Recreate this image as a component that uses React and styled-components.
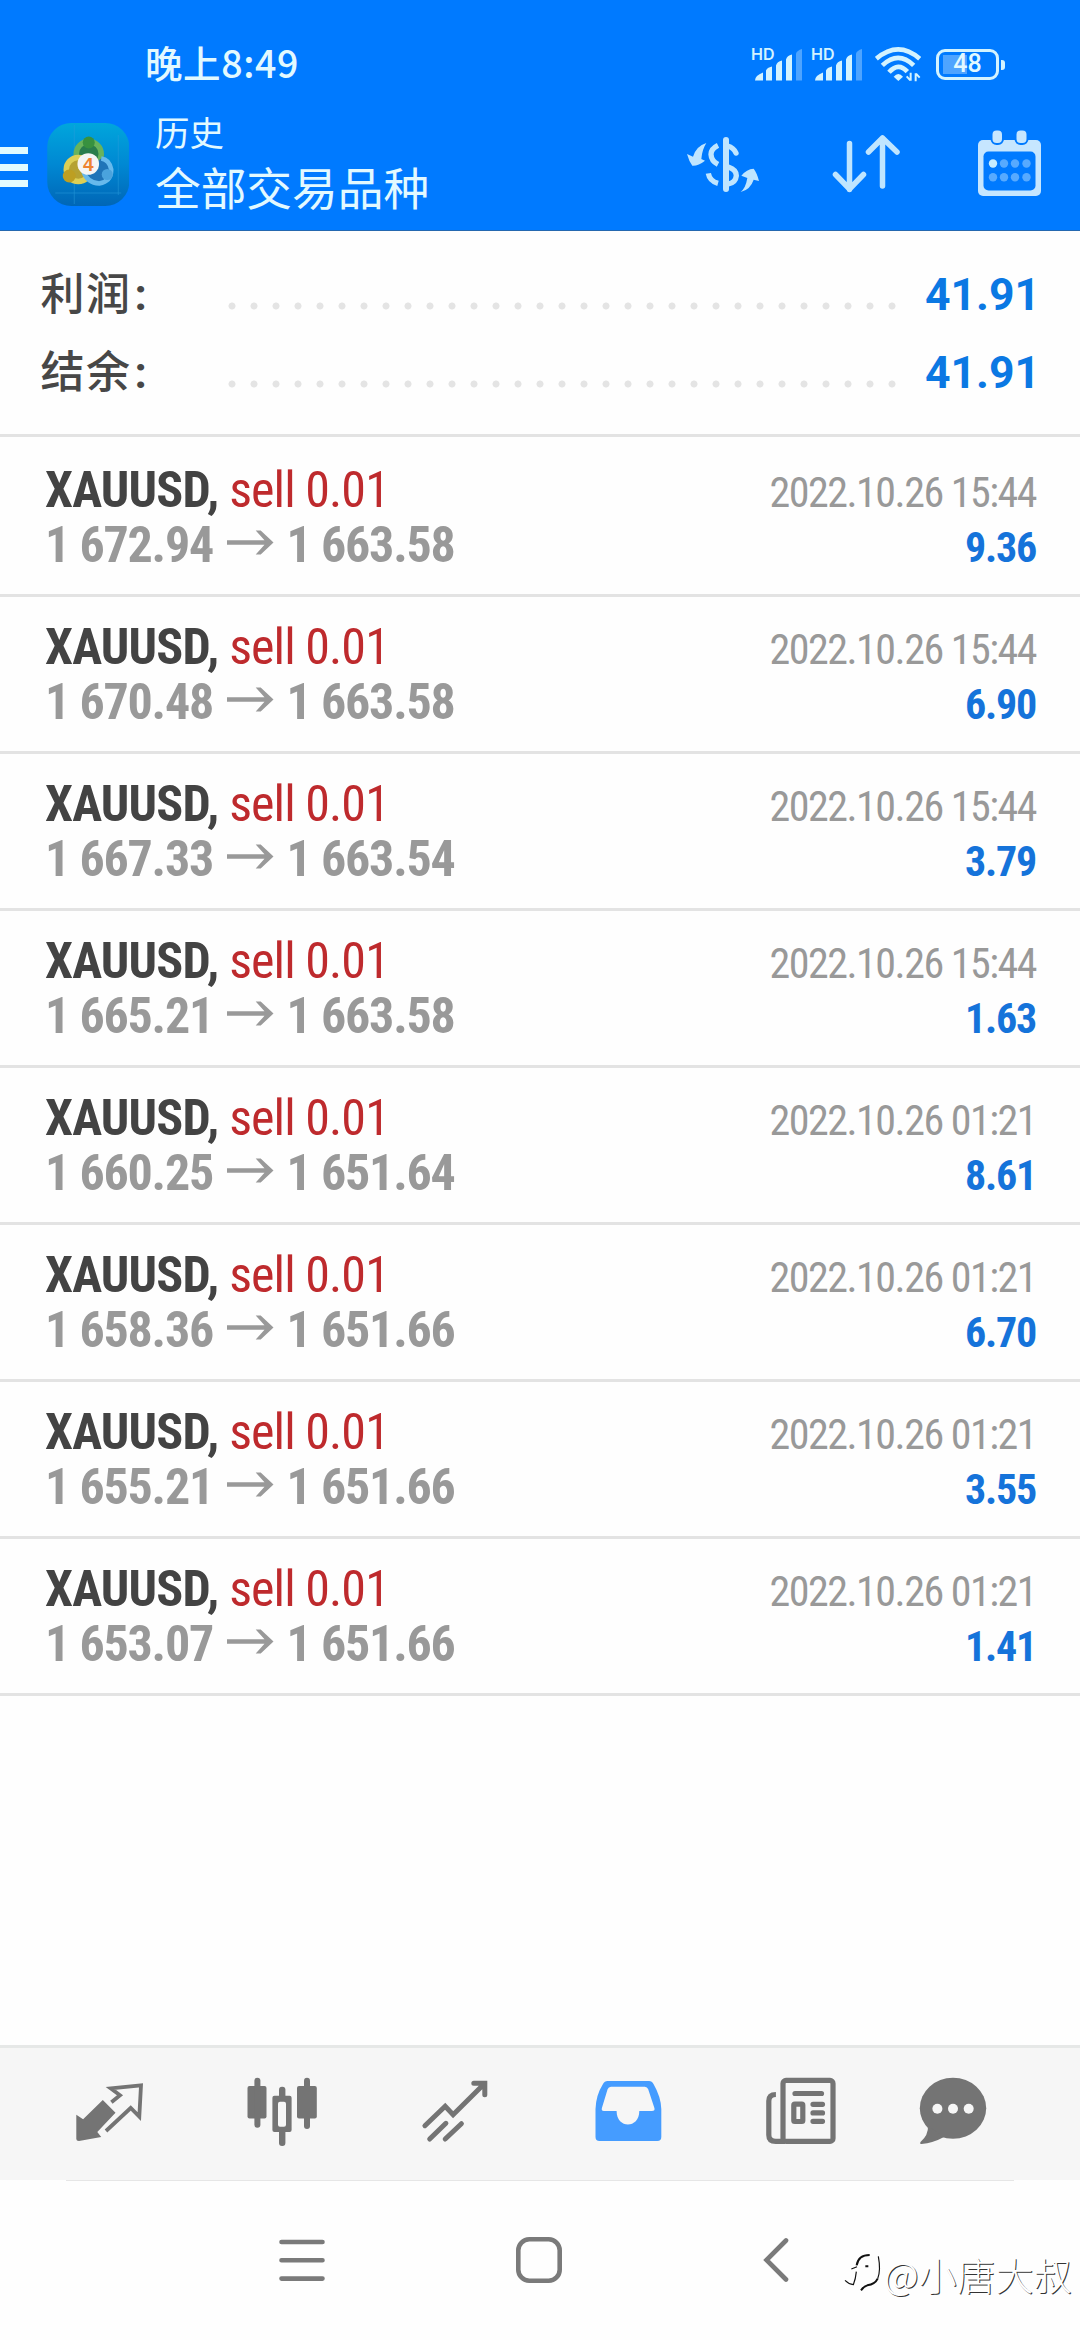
import React from "react";
import styled, { createGlobalStyle } from "styled-components";

const GlobalStyle = createGlobalStyle`
  * {
    box-sizing: border-box;
  }
  body {
    margin: 0;
    background: #fefefe;
    font-family: Roboto, "Noto Sans CJK SC", sans-serif;
  }
  svg {
    display: block;
    flex-shrink: 0;
  }
`;

const Screen = styled.div`
  position: relative;
  display: flex;
  flex-direction: column;
  width: 1080px;
  height: 2340px;
  background: #fefefe;
  overflow: hidden;
`;

const Header = styled.header`
  height: 231px;
  background: #007aff;
  border-bottom: 1px solid #2468b0;
  color: #e2f9ff;
`;

const StatusBar = styled.div`
  display: flex;
  align-items: center;
  height: 104px;
  padding: 24px 81px 0 145px;
`;

const Clock = styled.span`
  flex: 1;
  margin-top: -4px;
  font-family: "Noto Sans CJK SC", sans-serif;
  font-size: 37.5px;
  font-weight: 500;
  line-height: 50px;
  letter-spacing: 0.6px;
`;

const StatusIcons = styled.div`
  display: flex;
  align-items: center;
`;

const Signal = styled.svg`
  margin-right: ${(p) => p.$gap}px;
`;

const Battery = styled.div`
  position: relative;
  display: flex;
  align-items: center;
  justify-content: center;
  width: 63px;
  height: 31px;
  margin-left: 15px;
  border: 3px solid #d3f3ff;
  border-radius: 9px;
  font-size: 25px;
  font-weight: 500;
  line-height: 26px;
  background: linear-gradient(#4ea4ff, #4ea4ff) 4px 3px / 24px 19px no-repeat;

  &::after {
    content: "";
    position: absolute;
    right: -9px;
    top: 8px;
    width: 4px;
    height: 10px;
    border-radius: 0 3px 3px 0;
    background: #d3f3ff;
  }
`;

const Toolbar = styled.div`
  display: flex;
  align-items: center;
  height: 126px;
  padding: 0 37px 5px 0;
`;

const MenuButton = styled.div`
  display: flex;
  flex-direction: column;
  gap: 9.5px;
  width: 27.5px;
  margin: 5px 19px 0 0;

  span {
    height: 7px;
    background: #e2fbff;
  }
`;

const Titles = styled.div`
  flex: 1;
  display: flex;
  flex-direction: column;
  gap: 8px;
  margin: 3px 0 0 26px;
`;

const Caption = styled.span`
  font-size: 34.5px;
  line-height: 42px;
`;

const Title = styled.span`
  font-size: 45.7px;
  line-height: 56px;
`;

const Action = styled.div`
  margin-left: ${(p) => p.$gap}px;
  margin-bottom: ${(p) => p.$lift || 3}px;
`;

const Summary = styled.section`
  height: 206px;
  padding-top: 22px;
  border-bottom: 3px solid #e3e3e3;
`;

const SummaryRow = styled.div`
  display: flex;
  align-items: center;
  height: 78px;
  padding: 0 40px 0 40.5px;
`;

const SummaryLabel = styled.span`
  width: 180px;
  margin-top: 5px;
  color: #474747;
  font-size: 44px;
  font-weight: 500;
  line-height: 60px;
  letter-spacing: 1.5px;
`;

const Colon = styled.span`
  margin-left: 3px;
  font-weight: 700;
`;

const Dots = styled.span`
  width: 682px;
  height: 8px;
  margin-top: 27px;
  background: radial-gradient(circle, #e4e4e4 3.1px, transparent 3.9px) 0 0 / 22px 8px;
`;

const SummaryValue = styled.span`
  flex: 1;
  margin-top: 5px;
  color: #0b78e3;
  font-size: 44.5px;
  font-weight: 700;
  line-height: 60px;
  text-align: right;
`;

const List = styled.ul`
  margin: 0;
  padding: 0;
  list-style: none;
  border-bottom: 3px solid #e3e3e3;
`;

const Deal = styled.li`
  height: 157px;
  padding: 23px 44px 0 45px;
  border-top: 3px solid #e3e3e3;
  font-family: "Roboto Condensed", Roboto, sans-serif;
  letter-spacing: -1.2px;

  &:first-child {
    border-top-color: transparent;
  }
`;

const DealLine = styled.div`
  display: flex;
  align-items: baseline;
  justify-content: space-between;
  height: 55px;
  line-height: 55px;
  white-space: pre;
`;

const Symbol = styled.span`
  color: #434343;
  font-size: 50px;
  font-weight: 700;
  letter-spacing: -0.8px;
`;

const Side = styled.span`
  color: #be2a2d;
  font-weight: 400;
  letter-spacing: -0.9px;
`;

const Prices = styled.span`
  color: #999;
  font-size: 50px;
  font-weight: 700;

  svg {
    display: inline-block;
    vertical-align: 7px;
    margin: 0 13px 0 13.5px;
  }
`;

const DealTime = styled.span`
  color: #999;
  font-size: 42px;
  letter-spacing: -1.5px;
`;

const Profit = styled.span`
  color: #1573da;
  font-size: 42px;
  font-weight: 700;
`;

const Blank = styled.div`
  flex: 1;
`;

const TabBar = styled.nav`
  display: flex;
  height: 135px;
  padding-left: 22px;
  border-top: 3px solid #e6e8e7;
  background: #f6f6f6;
`;

const Tab = styled.div`
  display: flex;
  align-items: center;
  justify-content: center;
  width: ${(p) => p.$width || 173}px;
  color: ${(p) => (p.$active ? "#459cff" : "#747474")};
`;

const SystemBar = styled.div`
  display: flex;
  height: 160px;
  padding: 0 183.5px;

  &::before {
    content: "";
    align-self: flex-start;
    flex-shrink: 0;
    width: 948px;
    height: 1px;
    margin: 0 -830.5px 0 -117.5px;
    background: #e6e6e6;
  }
`;

const SystemKey = styled.div`
  display: flex;
  align-items: center;
  justify-content: center;
  width: 237px;
  flex-shrink: 0;
`;

const Watermark = styled.div`
  position: absolute;
  right: 8px;
  bottom: 36px;
  display: flex;
  align-items: center;
  color: #fff;
  font-family: "Noto Sans CJK SC", sans-serif;
  font-size: 38px;
  font-weight: 300;
  line-height: 60px;
  letter-spacing: 0.3px;
  text-shadow: 1px 1px 0.5px #333;
`;

const deals = [
  { open: "1 672.94", close: "1 663.58", time: "2022.10.26 15:44", profit: "9.36" },
  { open: "1 670.48", close: "1 663.58", time: "2022.10.26 15:44", profit: "6.90" },
  { open: "1 667.33", close: "1 663.54", time: "2022.10.26 15:44", profit: "3.79" },
  { open: "1 665.21", close: "1 663.58", time: "2022.10.26 15:44", profit: "1.63" },
  { open: "1 660.25", close: "1 651.64", time: "2022.10.26 01:21", profit: "8.61" },
  { open: "1 658.36", close: "1 651.66", time: "2022.10.26 01:21", profit: "6.70" },
  { open: "1 655.21", close: "1 651.66", time: "2022.10.26 01:21", profit: "3.55" },
  { open: "1 653.07", close: "1 651.66", time: "2022.10.26 01:21", profit: "1.41" },
];

const SignalIcon = ({ gap }) => (
  <Signal $gap={gap} width="54" height="40" viewBox="-4 -2 54 40" fill="#d3f3ff">
    <text x="-1" y="13.500" fontFamily="Inter" fontSize="16" fontWeight="600">HD</text>
    <path d="M3 34.500q0-5 8-8v8zM14 34.500v-10q1-3 6-4v14zM24 34.500v-15q1-4 6-5v20zM34 34.500v-21q1-4 6-5v26z" />
    <path d="M44 34.500v-27q1-3 6-4.500v31.500z" fill="#4ea4ff" />
  </Signal>
);

const WifiIcon = () => (
  <svg width="46" height="36" viewBox="41 32 138 108" fill="none" stroke="#d3f3ff" strokeWidth="14">
    <path d="M45 70Q111 14 175 70M63 90Q111 45 157 90M83 111Q111 79 138 109" />
    <path d="M97 124q14-16 28 0l-14 13z" fill="#d3f3ff" stroke="none" />
    <path d="M148 112v24M147 135l-11-12M163 138v-24M164 115l11 12" strokeWidth="6" />
  </svg>
);

const AppIcon = () => (
  <svg width="82.5" height="83" viewBox="0 0 82 83">
    <defs>
      <linearGradient id="tile" x1="0" y1="0" x2="0" y2="1">
        <stop offset="0" stopColor="#00a6dc" />
        <stop offset="0.5" stopColor="#0088d3" />
        <stop offset="1" stopColor="#0066b6" />
      </linearGradient>
    </defs>
    <rect width="82" height="83" rx="24" fill="url(#tile)" />
    <path d="M27 2v79M71 12v60M8 70h66" stroke="#2b9fdd" strokeWidth="0.7" opacity="0.7" />
    <circle cx="41.500" cy="31" r="12.500" fill="#2a7d4c" stroke="#68b35c" strokeWidth="5.500" />
    <circle cx="31" cy="46.500" r="12" fill="#b5a232" stroke="#dccf55" strokeWidth="5.500" />
    <path d="M36 48q4 12 16 12.500q12-2 12-14q-2-10-10-11" fill="#1f74b8" stroke="#67b9ec" strokeWidth="4.500" />
    <circle cx="41.500" cy="19.500" r="6" fill="#38913f" />
    <circle cx="22" cy="53" r="6.500" fill="#bd9f22" />
    <circle cx="60" cy="51.500" r="5.500" fill="#4aa3dd" />
    <circle cx="41" cy="41" r="10.800" fill="#f5f5f4" />
    <text x="41" y="47.500" textAnchor="middle" fontFamily="Liberation Sans" fontSize="19" fill="#ee8331" fontWeight="700">4</text>
  </svg>
);

const CurrencyIcon = () => (
  <svg width="100" height="80" viewBox="0 0 300 240" fill="#bfe5ff">
    <path d="M18 99l18 8q10-32 40-41q-13 20-15 48l11 5q-20 16-38 15q-10-13-16-35z" />
    <path d="M181 164q16-20 37-21q10 13 16 37l-16-4q-10 30-39 37q15-12 20-42z" />
    <rect x="126" y="48" width="18" height="165" rx="9" />
    <g fill="none" stroke="#bfe5ff" strokeWidth="16">
      <path d="M111 73Q90 83 90 100Q91 120 111 130M82 157Q86 180 111 187M142 138Q166 146 166 164Q164 184 142 189" />
      <path d="M140 75Q158 80 165 96" strokeLinecap="round" />
    </g>
  </svg>
);

const SortIcon = () => (
  <svg width="70" height="64" viewBox="0 0 70 64" fill="none" stroke="#bfe5ff" strokeWidth="5.500" strokeLinecap="round" strokeLinejoin="round">
    <path d="M18.500 12.500v46M4.500 43.500l14 14.500 14-14.500M51.500 55V7M37.500 21l14-14 14.500 14" />
  </svg>
);

const CalendarIcon = () => (
  <svg width="66" height="66" viewBox="0 0 66 66">
    <rect x="1" y="10" width="63" height="56" rx="5" fill="#c6e6ff" />
    <rect x="6.500" y="21.500" width="52" height="39" rx="5" fill="#007aff" />
    <rect x="14.500" y="-0.500" width="11.500" height="14.500" rx="5" fill="#c6e6ff" stroke="#007aff" strokeWidth="2" />
    <rect x="38.500" y="-0.500" width="12" height="14.500" rx="5" fill="#c6e6ff" stroke="#007aff" strokeWidth="2" />
    <g fill="#57aaff">
      {[16, 27, 38, 49.5].map((x) => (
        <React.Fragment key={x}>
          <circle cx={x} cy="33.500" r="4.200" fill={x === 16 ? "#c6ecff" : undefined} />
          <circle cx={x} cy="47.200" r="4.200" />
        </React.Fragment>
      ))}
    </g>
  </svg>
);

const ArrowIcon = () => (
  <svg width="47" height="25" viewBox="0 0 47 25" fill="#999">
    <path d="M0 10.200h37.500L28.700 0.500h5L46.500 12.500 33.700 24.500h-5l8.800-9.700H0z" />
  </svg>
);

const QuotesIcon = () => (
  <svg width="80" height="80" viewBox="0 0 80 80">
    <path d="M7.300 40.700l6.800 4.600L33.800 26l12.700 12.700L28.300 58l3.900 5L10 67q-2.700 0-2.700-2z" fill="currentColor" />
    <path d="M42.400 28.300l8.600-7-9.300-7 30.300-3-1.700 31.400-8.600-8.700L37 57" fill="none" stroke="currentColor" strokeWidth="3.800" />
  </svg>
);

const ChartIcon = () => (
  <svg width="80" height="80" viewBox="0 0 80 80" fill="currentColor">
    <rect x="5.500" y="12" width="19" height="32.500" rx="2" />
    <rect x="12.400" y="3.700" width="6" height="50" rx="3" />
    <rect x="55" y="12" width="19.800" height="32.500" rx="2" />
    <rect x="62" y="3.700" width="6" height="51.300" rx="3" />
    <rect x="37" y="12.700" width="6.400" height="13" rx="3" />
    <rect x="37" y="54" width="6.400" height="18" rx="3" />
    <path fillRule="evenodd" d="M32.400 21.700h15.200q2 0 2 2V56q0 2-2 2H32.400q-2 0-2-2V23.700q0-2 2-2zM38 27.700q-2 0-2 2v21q0 2 2 2h4q2 0 2-2v-21q0-2-2-2z" />
  </svg>
);

const TradeIcon = () => (
  <svg width="80" height="80" viewBox="0 0 80 80" fill="none" stroke="currentColor" strokeWidth="5" strokeLinecap="round">
    <path d="M9.900 51.700l20.300-19.400 7.900 8.400L69.800 9.300M58.800 9.300h11v11.400M14.700 65l16.200-15.700M30.200 65l16.200-15.300" />
  </svg>
);

const InboxIcon = () => (
  <svg width="80" height="80" viewBox="0 0 80 80" fill="currentColor">
    <path fillRule="evenodd" d="M19.500 7H61q3 0 4.500 3Q73 23 73.300 35v28q0 4-4 4H11.500q-4 0-4-4V35Q8 21 15 10q1.500-3 4.500-3zM23 12.700q-2.500 0-3.400 2.600L13.900 34q-.8 3 2 3h12.700c0 18 22.700 18 22.700 0h12.600q3.400 0 2.500-3l-6.200-18.700q-.9-2.600-3.400-2.600z" />
  </svg>
);

const NewsIcon = () => (
  <svg width="80" height="80" viewBox="0 0 80 80" fill="none" stroke="currentColor" strokeWidth="5.200">
    <rect x="22" y="6.400" width="50" height="61" rx="3" />
    <path d="M14.900 20.500Q7.800 20.500 7.800 27v34q0 6.400 7 6.400H24" />
    <path d="M34 19.500h26.500M52 30.300h9.500M52 38.900h9.500M52 47.300h9.500" strokeLinecap="round" />
    <rect x="32.800" y="30.200" width="9" height="17.300" rx="1" />
  </svg>
);

const ChatIcon = () => (
  <svg width="80" height="80" viewBox="0 0 80 80" fill="currentColor">
    <ellipse cx="40" cy="34.200" rx="33.200" ry="30.500" />
    <path d="M15 52q.5 9-7.500 16-1 2 1 2 11.500-1 22.500-7z" />
    <g fill="#f6f6f6">
      <circle cx="24.400" cy="34.700" r="5" />
      <circle cx="40" cy="34.700" r="5" />
      <circle cx="55.700" cy="34.700" r="5" />
    </g>
  </svg>
);

const WatermarkLogo = () => (
  <svg width="41" height="46" viewBox="12 72 123 138" fill="none" stroke="#111">
    <path d="M18 160Q30 172 43 173Q50 156 52 134M37 126L54 119M118 88Q126 130 116 155" strokeWidth="3.500" />
    <path d="M53 115Q58 84 92 84M79 118h9M116 155Q108 172 85 175Q75 178 66 190" strokeWidth="6" />
  </svg>
);

const App = () => {
  return (
    <>
      <GlobalStyle />
      <Screen>
        <Header>
          <StatusBar>
            <Clock>晚上8:49</Clock>
            <StatusIcons>
              <SignalIcon gap={6} />
              <SignalIcon gap={13} />
              <WifiIcon />
              <Battery>48</Battery>
            </StatusIcons>
          </StatusBar>
          <Toolbar>
            <MenuButton>
              <span />
              <span />
              <span />
            </MenuButton>
            <AppIcon />
            <Titles>
              <Caption>历史</Caption>
              <Title>全部交易品种</Title>
            </Titles>
            <Action $gap={0} $lift={8}><CurrencyIcon /></Action>
            <Action $gap={50}><SortIcon /></Action>
            <Action $gap={76}><CalendarIcon /></Action>
          </Toolbar>
        </Header>

        <Summary>
          <SummaryRow>
            <SummaryLabel>利润<Colon>:</Colon></SummaryLabel>
            <Dots />
            <SummaryValue>41.91</SummaryValue>
          </SummaryRow>
          <SummaryRow>
            <SummaryLabel>结余<Colon>:</Colon></SummaryLabel>
            <Dots />
            <SummaryValue>41.91</SummaryValue>
          </SummaryRow>
        </Summary>

        <List>
          {deals.map((deal) => (
            <Deal key={deal.open}>
              <DealLine>
                <Symbol>XAUUSD, <Side>sell 0.01</Side></Symbol>
                <DealTime>{deal.time}</DealTime>
              </DealLine>
              <DealLine>
                <Prices>{deal.open}<ArrowIcon />{deal.close}</Prices>
                <Profit>{deal.profit}</Profit>
              </DealLine>
            </Deal>
          ))}
        </List>

        <Blank />

        <TabBar>
          <Tab><QuotesIcon /></Tab>
          <Tab><ChartIcon /></Tab>
          <Tab><TradeIcon /></Tab>
          <Tab $active><InboxIcon /></Tab>
          <Tab><NewsIcon /></Tab>
          <Tab $width={132}><ChatIcon /></Tab>
        </TabBar>

        <SystemBar>
          <SystemKey>
            <svg width="46" height="43" viewBox="0 0 46 43" stroke="#7a7a7a" strokeWidth="4.600" strokeLinecap="round">
              <path d="M2.500 3h41M2.500 21.300h41M2.500 39.600h41" />
            </svg>
          </SystemKey>
          <SystemKey>
            <svg width="48" height="48" viewBox="0 0 48 48" fill="none" stroke="#7a7a7a" strokeWidth="4.600">
              <rect x="3.300" y="3.300" width="41.400" height="41.400" rx="11" />
            </svg>
          </SystemKey>
          <SystemKey>
            <svg width="26" height="44" viewBox="0 0 26 44" fill="none" stroke="#7a7a7a" strokeWidth="4.600" strokeLinecap="round">
              <path d="M23 2.500L3.500 22 23 41.500" />
            </svg>
          </SystemKey>
        </SystemBar>

        <Watermark>
          <WatermarkLogo />
          @小唐大叔
        </Watermark>
      </Screen>
    </>
  );
};

export default App;
